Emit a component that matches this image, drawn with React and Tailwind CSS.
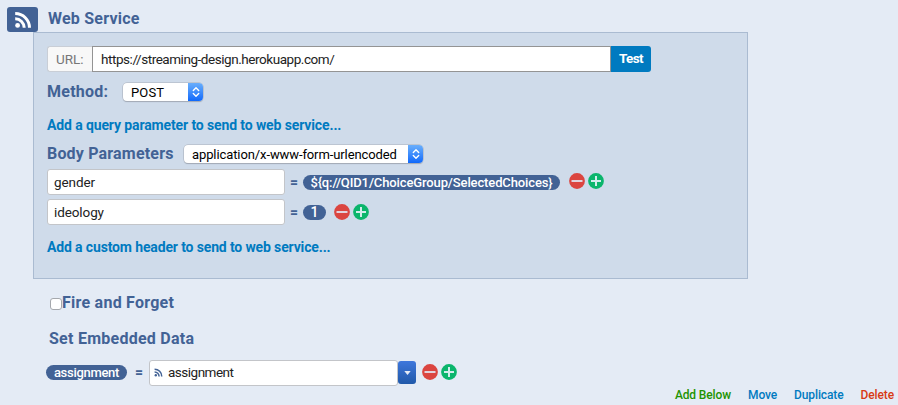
import React from "react";

function Rss({ className }) {
  return (
    <svg viewBox="0 0 18 18" className={className} fill="none" stroke="currentColor" strokeWidth="3">
      <circle cx="3.6" cy="14.4" r="2.4" fill="currentColor" stroke="none" />
      <path d="M1.2 7.8A9 9 0 0 1 10.2 16.8" />
      <path d="M1.2 2.5A14.3 14.3 0 0 1 15.5 16.8" />
    </svg>
  );
}

function PlusMinus({ className }) {
  return (
    <div className={`flex gap-[3px] ${className}`}>
      <svg viewBox="0 0 16 16" className="size-4">
        <circle cx="8" cy="8" r="7.9" fill="#db4540" />
        <path d="M2.5 8h11" stroke="#e2d3dd" strokeWidth="2" />
      </svg>
      <svg viewBox="0 0 16 16" className="size-4">
        <circle cx="8" cy="8" r="7.9" fill="#0bb56c" />
        <path d="M3 8h10M8 3v10" stroke="#d3ecec" strokeWidth="2" />
      </svg>
    </div>
  );
}

function Select({ className, children }) {
  return (
    <div className={`flex h-[18px] shrink-0 overflow-hidden rounded-[4px] bg-white text-black shadow-[0_0_0_0.5px_#a9afba,0_1px_1px_#9da5b3] ${className}`}>
      <div className="min-w-0 flex-1 pl-2 leading-[19px] whitespace-nowrap">{children}</div>
      <div className="flex w-[15px] shrink-0 items-center justify-center bg-gradient-to-b from-[#69aefb] to-[#0d68fb]">
        <svg viewBox="0 0 8 12" className="h-3 w-2" fill="none" stroke="white" strokeWidth="1.4" strokeLinecap="round" strokeLinejoin="round">
          <path d="M1.3 4.5 4 1.8l2.7 2.7M1.3 7.5 4 10.2l2.7-2.7" />
        </svg>
      </div>
    </div>
  );
}

function Pill({ className, children }) {
  return (
    <span className={`block h-[15px] shrink-0 rounded-full bg-[#426295] text-center leading-[15px] font-medium whitespace-nowrap text-white ${className}`}>
      {children}
    </span>
  );
}

function ParamRow({ name, children }) {
  return (
    <div className="flex h-[26px] items-center">
      <div className="h-[26px] w-[238px] rounded-[3px] border border-[#c3c5c9] bg-white pl-[6px] text-[13.5px] leading-[25px] tracking-[-0.1px] text-[#222]">{name}</div>
      <span className="ml-[5px] w-[9px] text-[14px] font-bold text-[#426295]">=</span>
      {children}
    </div>
  );
}

export default function App() {
  return (
    <div className="flex h-[405px] w-[898px] flex-col overflow-hidden bg-[#e4ebf5] font-['Roboto',sans-serif] text-[13px]">
      <div className="flex h-8 shrink-0 pt-[7px] pl-[7px]">
        <div className="flex h-[25px] w-[31px] items-center justify-center rounded-[3px] bg-[#426295] text-white">
          <Rss className="size-[18px]" />
        </div>
        <h1 className="ml-[10px] text-[16px] leading-[24px] font-bold tracking-[0.22px] text-[#426295]">Web Service</h1>
      </div>

      <section className="ml-[33px] h-[247px] w-[715px] shrink-0 border border-[#aabbd1] bg-[#cfdbea] pt-[13px] pl-[13px]">
        <div className="flex h-[26px]">
          <div className="w-[45px] rounded-l-[3px] border border-r-0 border-[#c9ced6] bg-[#f8f8f8] pl-2 text-[13.5px] leading-[24px] text-[#777]">URL:</div>
          <div className="w-[519px] border border-[#949494] bg-white pl-2 text-[13.5px] leading-[25px] tracking-[-0.45px] text-[#222]">https://streaming-design.herokuapp.com/</div>
          <div className="w-10 rounded-r-[3px] bg-[#007ac0] text-center text-[13.5px] leading-[25px] font-bold tracking-[-0.6px] text-white">Test</div>
        </div>
        <div className="flex h-10 items-center">
          <span className="w-[76px] text-[16px] font-bold tracking-[0.25px] text-[#426295]">Method:</span>
          <Select className="w-[80px]"><span className="tracking-[0.15px]">POST</span></Select>
        </div>
        <div className="h-[26px] text-[14px] leading-[26px] font-bold tracking-[-0.12px] text-[#007ac0]">Add a query parameter to send to web service...</div>
        <div className="flex h-[31px] items-center">
          <span className="w-[137px] text-[16px] font-bold tracking-[0.18px] text-[#426295]">Body Parameters</span>
          <Select className="w-[239px]"><span className="tracking-[-0.1px]">application/x-www-form-urlencoded</span></Select>
        </div>
        <div className="flex flex-col gap-1">
          <ParamRow name="gender">
            <Pill className="ml-1 w-[257px] tracking-[-0.12px]">{"${q://QID1/ChoiceGroup/SelectedChoices}"}</Pill>
            <PlusMinus className="mb-[2px] ml-[9px]" />
          </ParamRow>
          <ParamRow name="ideology">
            <Pill className="ml-1 w-[23px] text-[14px]">1</Pill>
            <PlusMinus className="ml-2" />
          </ParamRow>
        </div>
        <div className="h-11 text-[14px] leading-[44px] font-bold tracking-[-0.14px] text-[#007ac0]">Add a custom header to send to web service...</div>
      </section>

      <div className="flex h-[46px] shrink-0 items-center pl-[50px]">
        <span className="mt-[3px] size-3 rounded-[3px] border border-[#a5a8ad] bg-white" />
        <span className="mt-[2px] text-[16px] font-bold tracking-[0.25px] text-[#426295]">Fire and Forget</span>
      </div>
      <h2 className="h-[34px] shrink-0 pl-[49px] text-[16px] leading-[27px] font-bold tracking-[0.25px] text-[#426295]">Set Embedded Data</h2>
      <div className="flex h-[27px] shrink-0 items-center pl-[46px]">
        <Pill className="w-[81px] tracking-[-0.3px]">assignment</Pill>
        <span className="ml-2 w-[14px] text-[14px] font-bold text-[#426295]">=</span>
        <div className="flex h-[26px] w-[249px] items-center rounded-[3px] border border-[#c3c5c9] bg-white pl-1 text-[#222]">
          <Rss className="mr-[5px] size-[9px] text-[#426295]" />
          <span className="text-[13.5px] tracking-[-0.5px]">assignment</span>
        </div>
        <div className="flex h-[23px] w-[18px] items-center justify-center rounded-[3px] bg-gradient-to-b from-[#3e77dc] to-[#2059a9]">
          <svg viewBox="0 0 8 5" className="h-1 w-[7px]"><path d="M0 0h8L4 5z" fill="#e4ebf5" /></svg>
        </div>
        <PlusMinus className="mb-px ml-[6px]" />
      </div>
      <div className="flex h-[18px] items-center justify-end gap-[17px] pr-1 text-[12px] font-medium tracking-[-0.12px] text-[#007ac0]">
        <span className="text-[#1e9300]">Add Below</span>
        <span>Move</span>
        <span>Duplicate</span>
        <span className="text-[#d83a13]">Delete</span>
      </div>
    </div>
  );
}
